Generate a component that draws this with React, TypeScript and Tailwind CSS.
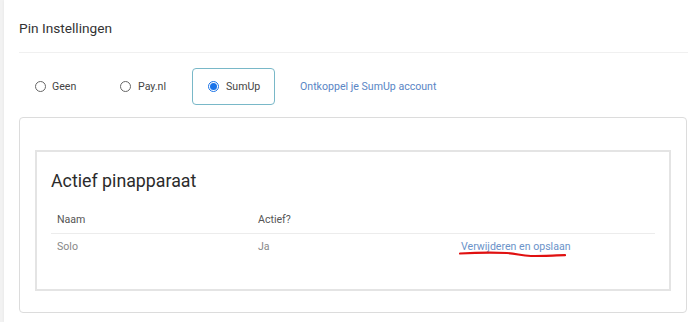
import React from 'react';

function Radio({ checked }: { checked?: boolean }) {
  return (
    <span
      className={
        'flex h-[11px] w-[11px] items-center justify-center rounded-full border ' +
        (checked ? 'border-[#1a73e8]' : 'border-[#666]')
      }>
      {checked && <span className="h-[7px] w-[7px] rounded-full bg-[#1a73e8]" />}
    </span>
  );
}

export default function App() {
  return (
    <div
      className="flex h-[322px] w-[688px] overflow-hidden bg-[#f2f2f2] pl-[4px]"
      style={{ fontFamily: 'Roboto, "Liberation Sans", sans-serif' }}>
      <div className="flex flex-1 flex-col bg-white pl-[15px] shadow-[0_0_3px_rgba(0,0,0,0.06)]">
        <div className="h-[53px] border-b border-[#f0f0f0] pt-[18px] text-[13.7px] leading-[20px] text-[#333]">
          Pin Instellingen
        </div>

        <div className="flex h-[64px] items-center pt-[3px] text-[10.6px] text-[#444]">
          <label className="ml-[16px] flex w-[85px] items-center gap-[6px]">
            <Radio />
            Geen
          </label>
          <label className="flex w-[72px] items-center gap-[7px]">
            <Radio />
            Pay.nl
          </label>
          <label className="flex h-[37px] w-[83px] items-center gap-[7px] rounded-[4px] border border-[#79b8c8] pl-[15px]">
            <Radio checked />
            SumUp
          </label>
          <a className="ml-[25px] text-[#5a86c5]">Ontkoppel je SumUp account</a>
        </div>

        <div className="mr-[1px] flex-1 rounded-[4px] border border-[#dcdcdc] px-[15px] pb-[21px] pt-[32px]">
          <div className="h-[141px] border-2 border-[#e4e4e4] px-[14px]">
            <h2 className="mt-[15px] text-[17.8px] leading-[28px] text-[#2b2b2b]">Actief pinapparaat</h2>
            <div className="mt-[12px] flex h-[27px] items-center border-b border-[#ececec] px-[6px] text-[10.6px] text-[#555]">
              <span className="w-[201px]">Naam</span>
              <span>Actief?</span>
            </div>
            <div className="flex h-[26px] items-center px-[6px] text-[10.6px] text-[#888]">
              <span className="w-[201px]">Solo</span>
              <span className="w-[203px]">Ja</span>
              <span className="relative text-[#6b93c9]">
                Verwijderen en opslaan
                <svg
                  className="absolute left-[-2px] top-[12px]"
                  width="110"
                  height="8"
                  viewBox="0 0 110 8">
                  <path
                    d="M1 2.5 C 20 1.5, 35 1.5, 48 2 C 58 2.5, 62 5, 72 5 C 85 5, 97 4.3, 106 4.2"
                    fill="none"
                    stroke="#e01010"
                    strokeWidth="2.2"
                    strokeLinecap="round"
                  />
                </svg>
              </span>
            </div>
          </div>
        </div>
        <div className="h-[9px]" />
      </div>
    </div>
  );
}
